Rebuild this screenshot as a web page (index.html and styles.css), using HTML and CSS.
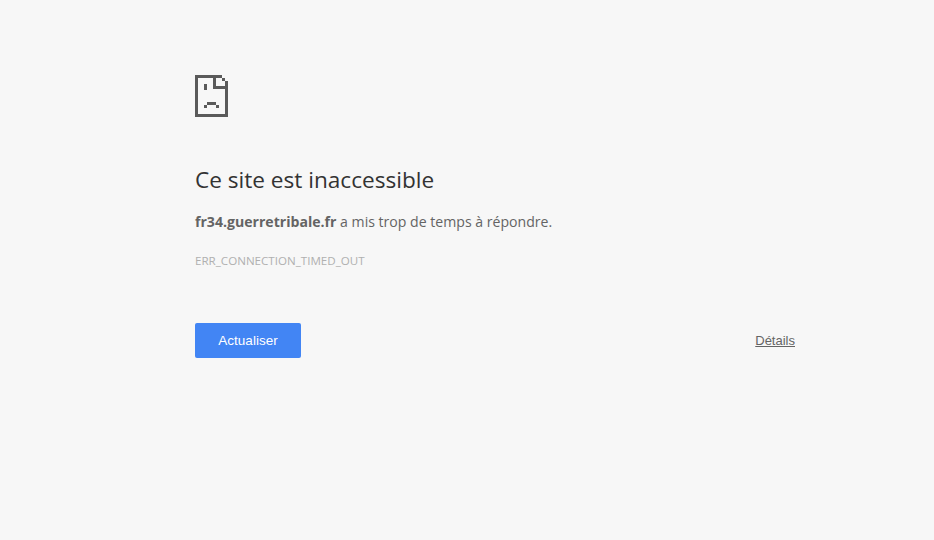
FILE: index.html
```html
<!DOCTYPE html>
<html lang="fr">
  <head>
    <meta charset="UTF-8" />
    <title>fr34.guerretribale.fr</title>
    <link rel="stylesheet" href="styles.css">
  </head>
  <body>
    <div class="interstitial">
      <svg class="icon" width="33" height="42" viewBox="0 0 33 42" shape-rendering="crispEdges" fill="#5a5a5a">
        <rect x="0" y="0" width="3" height="42" />
        <rect x="0" y="39" width="33" height="3" />
        <rect x="30" y="6" width="3" height="36" />
        <rect x="0" y="0" width="27" height="3" />
        <rect x="18" y="0" width="3" height="14" />
        <rect x="18" y="11" width="15" height="3" />
        <rect x="27" y="3" width="3" height="3" />
        <rect x="9" y="9" width="3" height="6" />
        <rect x="12" y="27" width="9" height="3" />
        <rect x="9" y="30" width="3" height="3" />
        <rect x="21" y="30" width="3" height="3" />
      </svg>
      <h1 class="heading">Ce site est inaccessible</h1>
      <p class="summary"><strong>fr34.guerretribale.fr</strong> a mis trop de temps à répondre.</p>
      <div class="error-code">ERR_CONNECTION_TIMED_OUT</div>
      <div class="actions">
        <button class="reload">Actualiser</button>
        <button class="details">Détails</button>
      </div>
    </div>
  </body>
</html>
```

FILE: styles.css
```css
body {
  margin: 0;
  background: #f7f7f7;
  color: #646464;
  font-family: "Open Sans", sans-serif;
  font-size: 14.1px;
}
.interstitial {
  width: 600px;
  margin-left: 195px;
  padding-top: 75px;
}
.icon {
  display: block;
}
.heading {
  margin: 47px 0 0;
  color: #333;
  font-size: 22.6px;
  font-weight: 400;
  line-height: 32px;
}
.summary {
  margin: 16px 0 0;
  line-height: 20px;
}
.error-code {
  margin-top: 21px;
  color: #b0b0b0;
  font-size: 11.6px;
  line-height: 16px;
}
.actions {
  display: flex;
  justify-content: space-between;
  align-items: center;
  margin-top: 54px;
}
.reload {
  width: 106px;
  height: 35px;
  border: 0;
  border-radius: 2px;
  background: #4285f4;
  color: #fff;
  font-family: "Liberation Sans", sans-serif;
  font-size: 13.5px;
  font-weight: 400;
}
.details {
  padding: 0;
  border: 0;
  background: none;
  color: #646464;
  font-family: "Liberation Sans", sans-serif;
  font-size: 13px;
  text-decoration: underline;
}
```
